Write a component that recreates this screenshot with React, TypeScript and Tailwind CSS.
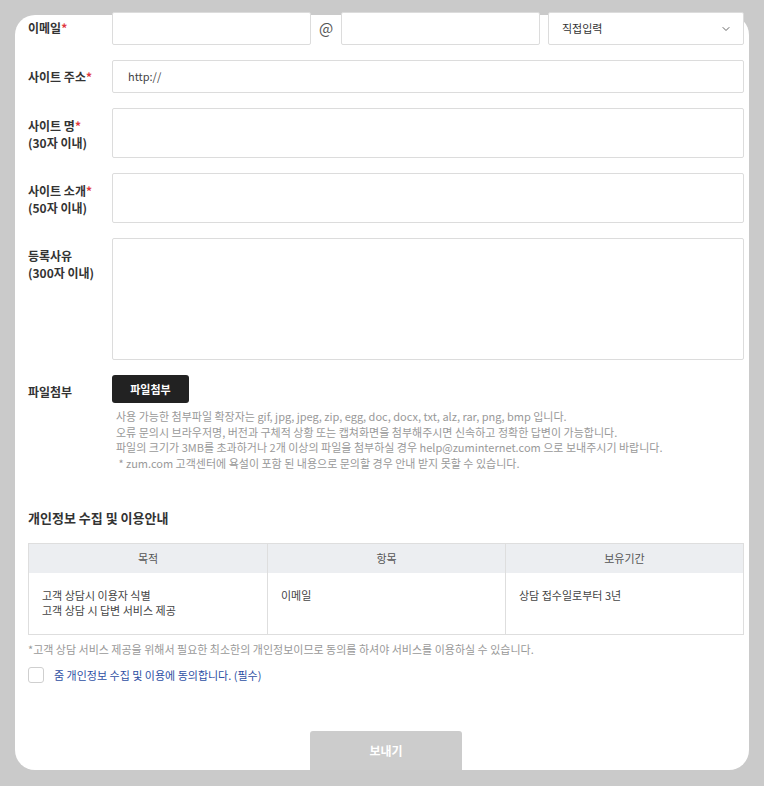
import { ChevronDown } from "lucide-react";

const font = { fontFamily: '"Noto Sans CJK KR", "Noto Sans", sans-serif' };

function Label({ title, sub, required }: { title: string; sub?: string; required?: boolean }) {
  return (
    <div className="w-[84px] shrink-0 text-[12px] leading-[17px] font-bold text-[#333]">
      <div>
        {title}
        {required && <span className="text-[#e0383e]">*</span>}
      </div>
      {sub && <div>{sub}</div>}
    </div>
  );
}

const boxCls = "rounded-[2px] border border-[#dcdcdc] bg-white";

export default function App() {
  return (
    <div className="min-h-[786px] bg-[#cacaca] px-[15px] pt-[15px]" style={font}>
      <div className="flex h-[755px] flex-col rounded-[20px] bg-white pl-[13px] pr-[5px]">
        {/* 이메일 */}
        <div className="-mt-[3px] flex items-start">
          <div className="pt-[7px]">
            <Label title="이메일" required />
          </div>
          <div className="flex flex-1 items-center">
            <div className={`${boxCls} h-[33px] w-[199px]`} />
            <span className="w-[30px] text-center text-[15px] text-[#555]">@</span>
            <div className={`${boxCls} h-[33px] w-[199px]`} />
            <div className={`${boxCls} ml-[8px] flex h-[33px] flex-1 items-center justify-between pl-[13px] pr-[11px] text-[11px] text-[#333]`}>
              <span>직접입력</span>
              <ChevronDown className="h-[12px] w-[12px] text-[#666]" strokeWidth={2} />
            </div>
          </div>
        </div>

        {/* 사이트 주소 */}
        <div className="mt-[15px] flex items-start">
          <div className="pt-[8px]">
            <Label title="사이트 주소" required />
          </div>
          <div className={`${boxCls} flex h-[33px] flex-1 items-center pl-[15px] text-[11px] text-[#444]`}>http://</div>
        </div>

        {/* 사이트 명 */}
        <div className="mt-[15px] flex items-start">
          <div className="pt-[9px]">
            <Label title="사이트 명" sub="(30자 이내)" required />
          </div>
          <div className={`${boxCls} h-[50px] flex-1`} />
        </div>

        {/* 사이트 소개 */}
        <div className="mt-[15px] flex items-start">
          <div className="pt-[9px]">
            <Label title="사이트 소개" sub="(50자 이내)" required />
          </div>
          <div className={`${boxCls} h-[50px] flex-1`} />
        </div>

        {/* 등록사유 */}
        <div className="mt-[15px] flex items-start">
          <div className="pt-[9px]">
            <Label title="등록사유" sub="(300자 이내)" />
          </div>
          <div className={`${boxCls} h-[122px] flex-1`} />
        </div>

        {/* 파일첨부 */}
        <div className="mt-[15px] flex items-start">
          <div className="pt-[8px]">
            <Label title="파일첨부" />
          </div>
          <div className="flex-1">
            <button className="h-[28px] w-[77px] rounded-[3px] bg-[#222] text-[11px] font-bold text-white">파일첨부</button>
            <div className="mt-[6px] pl-[4px] text-[11px] leading-[15.6px] text-[#999]">
              <p>사용 가능한 첨부파일 확장자는 gif, jpg, jpeg, zip, egg, doc, docx, txt, alz, rar, png, bmp 입니다.</p>
              <p>오류 문의시 브라우저명, 버전과 구체적 상황 또는 캡쳐화면을 첨부해주시면 신속하고 정확한 답변이 가능합니다.</p>
              <p>파일의 크기가 3MB를 초과하거나 2개 이상의 파일을 첨부하실 경우 help@zuminternet.com 으로 보내주시기 바랍니다.</p>
              <p>&nbsp;* zum.com 고객센터에 욕설이 포함 된 내용으로 문의할 경우 안내 받지 못할 수 있습니다.</p>
            </div>
          </div>
        </div>

        {/* 개인정보 */}
        <h2 className="mt-[37px] text-[13px] font-bold leading-[18px] text-[#333]">개인정보 수집 및 이용안내</h2>
        <div className="mt-[16px] grid grid-cols-3 border border-[#dedede] text-[11px] text-[#555]">
          <div className="flex h-[29px] items-center justify-center bg-[#eceef1]">목적</div>
          <div className="flex h-[29px] items-center justify-center border-l border-[#dedede] bg-[#eceef1]">항목</div>
          <div className="flex h-[29px] items-center justify-center border-l border-[#dedede] bg-[#eceef1]">보유기간</div>
          <div className="h-[61px] pl-[13px] pt-[15px] leading-[15px] text-[#444]">
            <p>고객 상담시 이용자 식별</p>
            <p>고객 상담 시 답변 서비스 제공</p>
          </div>
          <div className="h-[61px] border-l border-[#dedede] pl-[13px] pt-[15px] leading-[15px] text-[#444]">이메일</div>
          <div className="h-[61px] border-l border-[#dedede] pl-[13px] pt-[15px] leading-[15px] text-[#444]">상담 접수일로부터 3년</div>
        </div>
        <p className="mt-[7px] text-[11px] leading-[15px] text-[#999]">*고객 상담 서비스 제공을 위해서 필요한 최소한의 개인정보이므로 동의를 하셔야 서비스를 이용하실 수 있습니다.</p>
        <label className="mt-[10px] flex items-center">
          <span className="h-[16px] w-[16px] rounded-[3px] border border-[#cfcfcf] bg-white" />
          <span className="ml-[10px] text-[11px] text-[#2e4fa3]">줌 개인정보 수집 및 이용에 동의합니다. (필수)</span>
        </label>

        <div className="mt-auto flex justify-center">
          <button className="h-[39px] w-[152px] rounded-t-[3px] bg-[#cccccc] text-[12px] font-bold text-white">보내기</button>
        </div>
      </div>
    </div>
  );
}
